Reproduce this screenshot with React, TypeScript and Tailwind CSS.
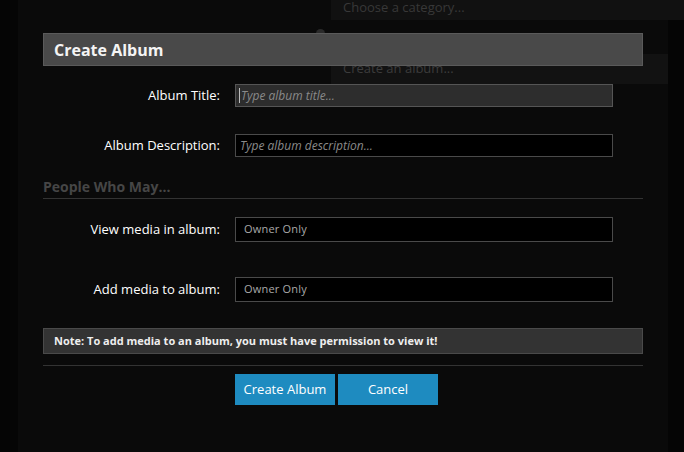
import React from 'react'

const font = { fontFamily: '"Open Sans", "Noto Sans", sans-serif' }

function Row({ label, children, className }: { label: string; children: React.ReactNode; className?: string }) {
  return (
    <div className={`flex items-center ${className ?? ''}`}>
      <div className="w-[177px] shrink-0 text-right text-[13px] text-white">{label}</div>
      <div className="ml-[15px]">{children}</div>
    </div>
  )
}

function SelectBox({ value }: { value: string }) {
  return (
    <div className="flex h-[25px] w-[378px] items-center border border-[#4a4a4a] bg-black pl-[8px] text-[11px] tracking-[0.2px] text-[#a8a8a8]">
      {value}
    </div>
  )
}

export default function App() {
  return (
    <div className="relative h-[452px] w-[684px] overflow-hidden bg-[#050505]" style={font}>
      {/* modal panel */}
      <div className="ml-[18px] h-full w-[650px] bg-[#0a0a0a] px-[25px] pt-[33px]">
        <div className="h-[33px] w-[600px]" />

        <Row label="Album Title:" className="mt-[18px]">
          <div className="flex h-[23px] w-[378px] items-center border border-[#555] bg-[#2d2d2d] pl-[3px]">
            <span className="mr-[1px] h-[15px] w-px bg-[#bbb]" />
            <span className="text-[12px] italic text-[#8a8a8a]">Type album title...</span>
          </div>
        </Row>

        <Row label="Album Description:" className="mt-[27px]">
          <div className="flex h-[23px] w-[378px] items-center border border-[#4a4a4a] bg-black pl-[4px]">
            <span className="text-[12px] italic text-[#8a8a8a]">Type album description...</span>
          </div>
        </Row>

        <div className="mt-[20px] h-[22px] w-[600px] border-b border-[#333] text-[14px] font-bold leading-[20px] text-[#464646]">
          People Who May...
        </div>

        <Row label="View media in album:" className="mt-[18px]">
          <SelectBox value="Owner Only" />
        </Row>

        <Row label="Add media to album:" className="mt-[35px]">
          <SelectBox value="Owner Only" />
        </Row>

        <div className="mt-[26px] flex h-[26px] w-[600px] items-center border border-[#4a4a4a] bg-[#333] pl-[10px] text-[11px] font-bold text-[#eee]">
          Note: To add media to an album, you must have permission to view it!
        </div>

        <div className="mt-[11px] w-[600px] border-t border-[#333]" />

        <div className="ml-[192px] mt-[8px] flex gap-[3px]">
          <button className="h-[31px] w-[100px] bg-[#1e8bc0] text-[13px] text-white">Create Album</button>
          <button className="h-[31px] w-[100px] bg-[#1e8bc0] text-[13px] text-white">Cancel</button>
        </div>
      </div>

      {/* page elements showing behind / over the modal */}
      <div className="absolute left-[331px] top-0 flex h-[20px] w-[353px] items-center bg-[#111] pl-[12px] text-[13px] text-[#383838]">
        <span className="-mt-[5px]">Choose a category...</span>
      </div>
      <div className="absolute left-[331px] top-[54px] flex h-[30px] w-[337px] items-end bg-[#121212] pb-[6px] pl-[12px] text-[13px] text-[#3c3c3c]">
        Create an album...
      </div>
      <div className="absolute left-[316px] top-[29px] h-[9px] w-[9px] rounded-full bg-[#2a2a2a]" />
      <div className="absolute left-[43px] top-[33px] flex h-[33px] w-[600px] items-center border border-[#5a5a5a] bg-[#494949] pl-[10px]">
        <h1 className="text-[16px] font-bold text-[#f4f4f4]">Create Album</h1>
      </div>
    </div>
  )
}
